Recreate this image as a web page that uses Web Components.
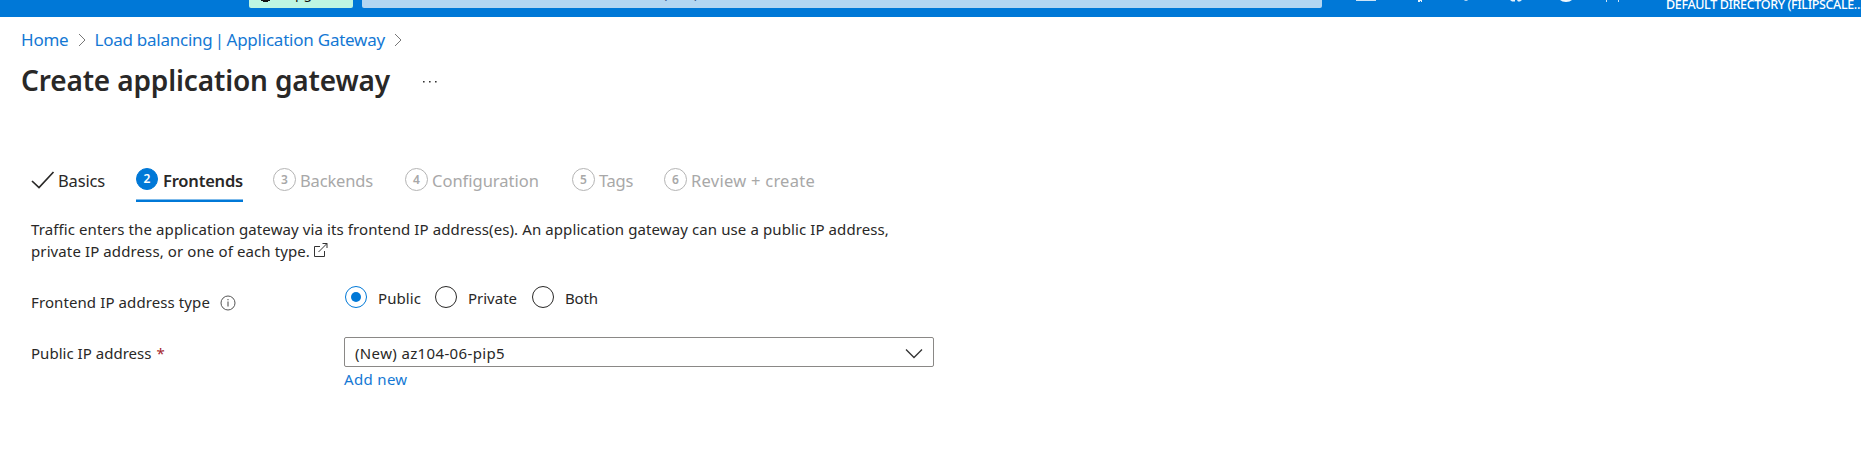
<!DOCTYPE html>
<html lang="en">
<head>
<meta charset="utf-8">
<title>Create application gateway</title>
<style>
  body { margin: 0; background: #fff; color: #292827; font-family: "Noto Sans", "Open Sans", sans-serif; overflow: hidden; }
</style>
</head>
<body>
<gateway-page></gateway-page>
<script>
const define = (name, html, init) => customElements.define(name, class extends HTMLElement {
  constructor() {
    super();
    this.attachShadow({ mode: 'open' }).innerHTML = html;
  }
  connectedCallback() { if (init) init(this, this.shadowRoot); }
});

/* One line of text, tracked so that it fills the width given in w. */
define('fit-text', `
  <style>
    :host { display: block; flex: none; white-space: nowrap; }
    span { display: inline-block; vertical-align: top; }
  </style><span><slot></slot></span>`, (el, root) => {
  const w = +el.getAttribute('w');
  el.style.width = w + 'px';
  const span = root.querySelector('span');
  const count = el.textContent.length;
  span.style.letterSpacing = (w - span.getBoundingClientRect().width) / count + 'px';
});

define('top-bar', `
  <style>
    :host { display: flex; height: 17px; background: #0078d7; overflow: hidden; padding-left: 249px; color: #fff; }
    .up, .search { height: 8px; border-radius: 0 0 2px 2px; overflow: hidden; box-sizing: border-box; display: flex; flex: none; color: #111; font-size: 14px; line-height: 20px; }
    .up { width: 104px; background: #bdf6e2; padding-left: 12px; margin-right: 9px; }
    .up svg { margin-right: 13px; flex: none; }
    .search { width: 960px; background: #b3d6f2; padding-left: 29px; color: #33558a; }
    fit-text { margin-top: -17px; }
    .icons { flex: none; margin-left: 28px; }
    .dir { margin: -5px 0 0 15px; font-size: 12.5px; line-height: 19px; font-weight: 500; }
  </style>
  <div class="up"><svg width="11" height="3"><path d="M0 0h9v1h-9zM2 1h5v1h-5z" fill="#111"/></svg><fit-text w="56">Upgrade</fit-text></div>
  <div class="search"><fit-text w="308">Search resources, services, and docs (G+/)</fit-text></div>
  <svg class="icons" width="301" height="4" fill="#fff">
    <path d="M6 0h20v1h-20z" opacity=".8"/>
    <path d="M68 0h4v2h-1v-1h-1v1h-2z" opacity=".9"/>
    <path d="M114 0h4l-1 1h-2z" opacity=".65"/>
    <path d="M160 0h5v1.500h-3zM167 0h5l-2 1.500h-2z" opacity=".9"/>
    <path d="M210 0h12q-2 2-6 2t-6-2z" opacity=".95"/>
    <path d="M256 0h1v2h-1zM268 0h1v2h-1z" opacity=".8"/>
  </svg>
  <fit-text class="dir" w="197">DEFAULT DIRECTORY (FILIPSCALE...</fit-text>`);

define('bread-crumbs', `
  <style>
    :host { display: flex; font-size: 17px; line-height: 24px; color: #1478d4; padding: 10px 0 0 21px; }
    svg { flex: none; margin: 6px 0 0; }
    .a { margin-left: 9px; margin-right: 9px; }
    .b { margin-left: 9px; }
    .bar { width: 14px; text-align: center; }
    fit-text, .bar { position: relative; top: .5px; }
  </style>
  <fit-text w="47.500">Home</fit-text>
  <svg class="a" width="8" height="14"><path d="M1 1l6 6-6 6" fill="none" stroke="#777"/></svg>
  <fit-text w="118">Load balancing</fit-text><span class="bar">|</span><fit-text w="158.500">Application Gateway</fit-text>
  <svg class="b" width="8" height="14"><path d="M1 1l6 6-6 6" fill="none" stroke="#777"/></svg>`);

define('page-title', `
  <style>
    :host { display: flex; padding: 9px 0 0 21px; }
    h1 { margin: 0; font-size: 28px; line-height: 40px; font-weight: 600; color: #292827; }
    svg { margin: 20px 0 0 33px; }
  </style>
  <h1><fit-text w="369">Create application gateway</fit-text></h1>
  <svg width="14" height="4" fill="#333"><path d="M0 1h1.600v1.600h-1.600zM6 1h1.600v1.600h-1.600zM12 1h1.600v1.600h-1.600z"/></svg>`);

define('wizard-step', `
  <style>
    :host { display: flex; box-sizing: border-box; height: 34px; flex: none; font-size: 16.500px; line-height: 26px; color: #a8a8a8; }
    :host([active]) { color: #292827; font-weight: 600; box-shadow: inset 0 -2.500px #0078d7; }
    :host([done]) { color: #292827; }
    i { box-sizing: border-box; width: 23px; height: 23px; border: 1px solid #b4b4b4; border-radius: 50%; font: 600 12px/21px "Noto Sans", sans-serif; text-align: center; margin-right: 4px; flex: none; }
    :host([active]) i { width: 22px; height: 22px; color: #fff; background: #0078d7; border-color: #0078d7; margin-right: 5px; line-height: 20px; }
    svg { display: none; margin: 2px 3px 0 0; flex: none; }
    :host([done]) i { display: none; }
    :host([done]) svg { display: block; }
  </style>
  <i></i><svg width="24" height="19"><path d="M1 11l7 6.500L22.500 2" fill="none" stroke="#292827" stroke-width="1.700"/></svg>
  <slot></slot>`, (el, root) => { root.querySelector('i').textContent = el.getAttribute('n') || ''; });

define('wizard-steps', `
  <style>
    :host { display: flex; padding: 68px 0 0 31px; }
  </style>
  <wizard-step done><fit-text w="47">Basics</fit-text></wizard-step>
  <wizard-step n="2" active style="margin-left:31px"><fit-text w="80">Frontends</fit-text></wizard-step>
  <wizard-step n="3" style="margin-left:30px"><fit-text w="73">Backends</fit-text></wizard-step>
  <wizard-step n="4" style="margin-left:32px"><fit-text w="107">Configuration</fit-text></wizard-step>
  <wizard-step n="5" style="margin-left:33px"><fit-text w="34">Tags</fit-text></wizard-step>
  <wizard-step n="6" style="margin-left:31px"><fit-text w="124">Review + create</fit-text></wizard-step>`);

define('intro-text', `
  <style>
    :host { display: block; padding: 16px 0 0 31px; font-size: 15px; line-height: 22px; }
    div { display: flex; }
    svg { margin: 3px 0 0 4px; }
  </style>
  <fit-text w="858">Traffic enters the application gateway via its frontend IP address(es). An application gateway can use a public IP address,</fit-text>
  <div><fit-text w="279">private IP address, or one of each type.</fit-text>
  <svg width="14" height="15" fill="none" stroke="#333"><path d="M6 3.500H.5v10h10V8M8.500.5h4.500V5M13 .5l-8.500 8.500"/></svg></div>`);

define('radio-option', `
  <style>
    :host { display: flex; flex: none; }
    b { box-sizing: border-box; width: 22px; height: 22px; border: 1px solid #292827; border-radius: 50%; margin-right: 11px; display: grid; place-items: center; }
    :host([checked]) b { border-color: #0078d7; }
    :host([checked]) b::after { content: ""; width: 10px; height: 10px; border-radius: 50%; background: #0078d7; }
    div { padding-top: 1px; }
  </style><b></b><div><slot></slot></div>`);

define('form-row', `
  <style>
    :host { display: grid; grid-template-columns: 313px 1fr; padding-left: 31px; font-size: 15px; line-height: 22px; }
    .label { padding-top: 5px; display: flex; }
  </style>
  <div class="label"><slot name="label"></slot></div><div><slot></slot></div>`);

define('drop-down', `
  <style>
    :host { display: flex; box-sizing: border-box; width: 590px; height: 30px; border: 1px solid #8a8886; border-radius: 2px; padding: 4px 10px 0 10px; justify-content: space-between; }
    svg { margin-top: 6px; }
  </style><slot></slot><svg width="18" height="12"><path d="M1 1.500l8 8 8-8" fill="none" stroke="#333" stroke-width="1.300"/></svg>`);

define('gateway-page', `
  <style>
    :host { display: block; height: 472px; }
    .radios { display: flex; padding-left: 1px; }
    .radios > * + * { margin-left: 14px; }
    .radios > :last-child { margin-left: 15px; }
    .info { margin: 4px 0 0 10px; }
    .star { color: #a4262c; margin-left: 5px; }
    .link { color: #1478d4; margin-top: 1px; }
  </style>
  <top-bar></top-bar>
  <bread-crumbs></bread-crumbs>
  <page-title></page-title>
  <wizard-steps></wizard-steps>
  <intro-text></intro-text>
  <form-row style="margin-top:24px">
    <fit-text slot="label" w="179">Frontend IP address type</fit-text>
    <svg slot="label" class="info" width="16" height="16"><circle cx="8" cy="8" r="7" fill="none" stroke="#555"/><path d="M8 6.500v5M8 4v1.300" stroke="#555" stroke-width="1.100"/></svg>
    <div class="radios">
      <radio-option checked><fit-text w="43">Public</fit-text></radio-option>
      <radio-option><fit-text w="49">Private</fit-text></radio-option>
      <radio-option><fit-text w="33">Both</fit-text></radio-option>
    </div>
  </form-row>
  <form-row style="margin-top:24px">
    <fit-text slot="label" w="120.500">Public IP address</fit-text>
    <span slot="label" class="star">*</span>
    <drop-down><fit-text w="150">(New) az104-06-pip5</fit-text></drop-down>
    <fit-text class="link" w="63.500">Add new</fit-text>
  </form-row>`);
</script>
</body>
</html>
